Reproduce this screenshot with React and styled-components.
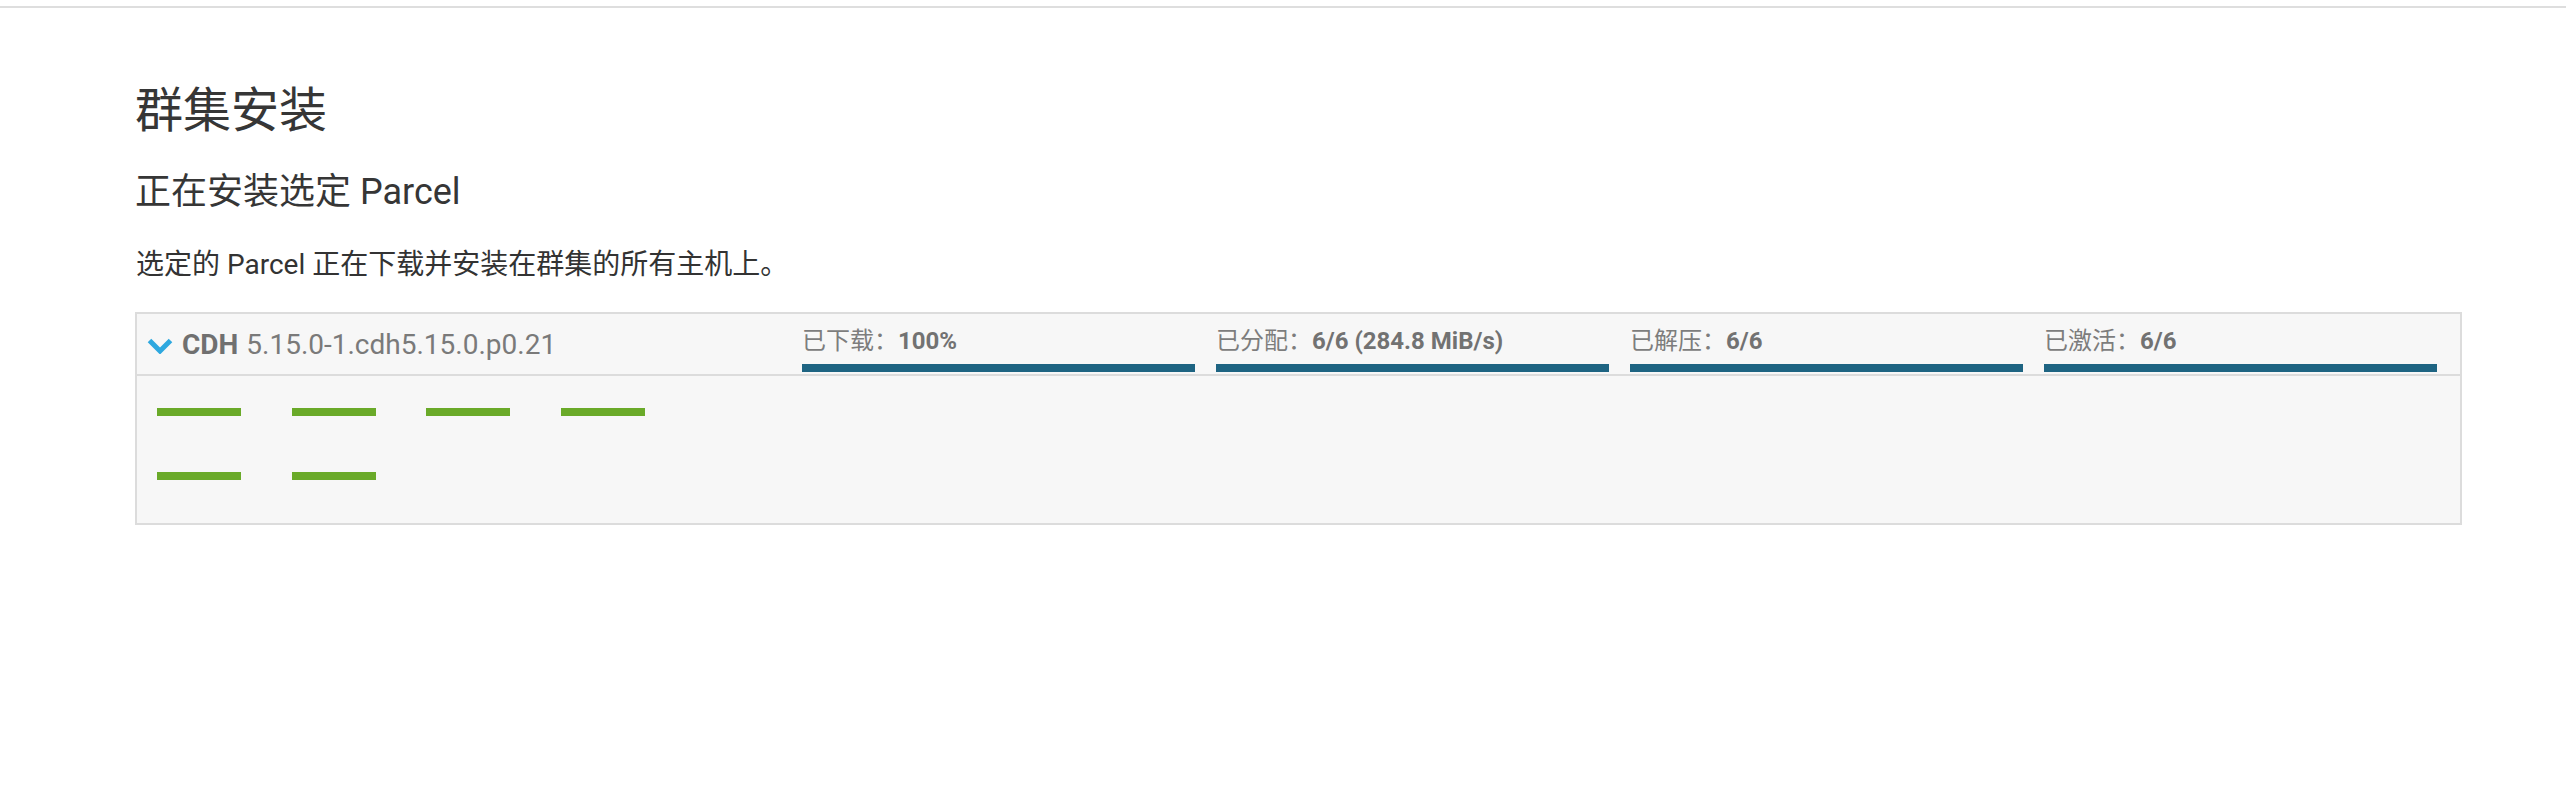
import React from 'react';
import styled, { createGlobalStyle } from 'styled-components';

const stats = [
    { label: '已下载：', value: '100%', progress: 100 },
    { label: '已分配：', value: '6/6 (284.8 MiB/s)', progress: 100 },
    { label: '已解压：', value: '6/6', progress: 100 },
    { label: '已激活：', value: '6/6', progress: 100 },
];

const hosts = ['host1', 'host2', 'host3', 'host4', 'host5', 'host6'];

const Chevron = () => (
    <ChevronIcon viewBox="0 0 26 16">
        <polyline points="2.5,2.5 13,13 23.5,2.5" />
    </ChevronIcon>
);

const App = () => {
    return (
        <>
            <GlobalStyle />
            <TopRule />
            <Page>
                <Title>群集安装</Title>
                <Subtitle>正在安装选定 Parcel</Subtitle>
                <Description>选定的 Parcel 正在下载并安装在群集的所有主机上。</Description>

                <ParcelBox>
                    <ParcelHeader>
                        <ParcelName>
                            <Chevron />
                            <Product>CDH</Product>
                            <Version>5.15.0-1.cdh5.15.0.p0.21</Version>
                        </ParcelName>
                        {stats.map((s) => (
                            <Stat key={s.label}>
                                <StatLabel>
                                    {s.label}<StatValue>{s.value}</StatValue>
                                </StatLabel>
                                <Track>
                                    <Fill style={{ width: `${s.progress}%` }} />
                                </Track>
                            </Stat>
                        ))}
                    </ParcelHeader>
                    <ParcelBody>
                        <HostGrid>
                            {hosts.map((h) => (
                                <HostDash key={h} title={h} />
                            ))}
                        </HostGrid>
                    </ParcelBody>
                </ParcelBox>
            </Page>
        </>
    );
};

const GlobalStyle = createGlobalStyle`
    body {
        margin: 0;
        background: #fff;
        font-family: Roboto, "Noto Sans CJK SC", sans-serif;
        color: #333;
    }
`;

const TopRule = styled.div`
    height: 6px;
    border-bottom: 2px solid #dedede;
`;

const Page = styled.div`
    display: flex;
    flex-direction: column;
    padding: 0 104px 0 135px;
`;

const Title = styled.h1`
    margin: 74px 0 0;
    font-size: 48px;
    line-height: 58px;
    font-weight: 400;
    color: #363636;
`;

const Subtitle = styled.h2`
    margin: 30px 0 0;
    font-size: 36px;
    line-height: 44px;
    font-weight: 400;
    color: #363636;
`;

const Description = styled.p`
    margin: 34px 0 0 1px;
    font-size: 28px;
    line-height: 34px;
    color: #333;
`;

const ParcelBox = styled.div`
    margin-top: 30px;
    border: 2px solid #dcdcdc;
    background: #f7f7f7;
`;

const ParcelHeader = styled.div`
    display: grid;
    grid-template-columns: 1fr repeat(4, 393px);
    column-gap: 21px;
    height: 60px;
    padding: 0 23px 0 10px;
    border-bottom: 2px solid #dcdcdc;
`;

const ParcelName = styled.div`
    display: flex;
    align-items: center;
    font-size: 28px;
    color: #777;
    white-space: nowrap;
`;

const ChevronIcon = styled.svg`
    width: 26px;
    height: 16px;
    margin: 4px 9px 0 0;
    flex-shrink: 0;
    fill: none;
    stroke: #2ea8df;
    stroke-width: 5;
    stroke-linecap: butt;
    stroke-linejoin: miter;
`;

const Product = styled.span`
    font-weight: 700;
    color: #707070;
    margin-right: 8px;
`;

const Version = styled.span`
    color: #7a7a7a;
`;

const Stat = styled.div`
    display: flex;
    flex-direction: column;
    justify-content: flex-end;
    padding-bottom: 2px;
`;

const StatLabel = styled.div`
    font-size: 24px;
    line-height: 30px;
    color: #7d7d7d;
    white-space: nowrap;
`;

const StatValue = styled.span`
    font-weight: 700;
    color: #727272;
`;

const Track = styled.div`
    height: 8px;
    margin-top: 8px;
    background: #e3e3e3;
`;

const Fill = styled.div`
    height: 100%;
    background: #1e6482;
`;

const ParcelBody = styled.div`
    padding: 32px 21px 43px 20px;
`;

const HostGrid = styled.div`
    display: grid;
    grid-template-columns: repeat(4, 84px);
    column-gap: 50.5px;
    row-gap: 56px;
`;

const HostDash = styled.div`
    height: 8px;
    background: #6aaa29;
`;

export default App;
